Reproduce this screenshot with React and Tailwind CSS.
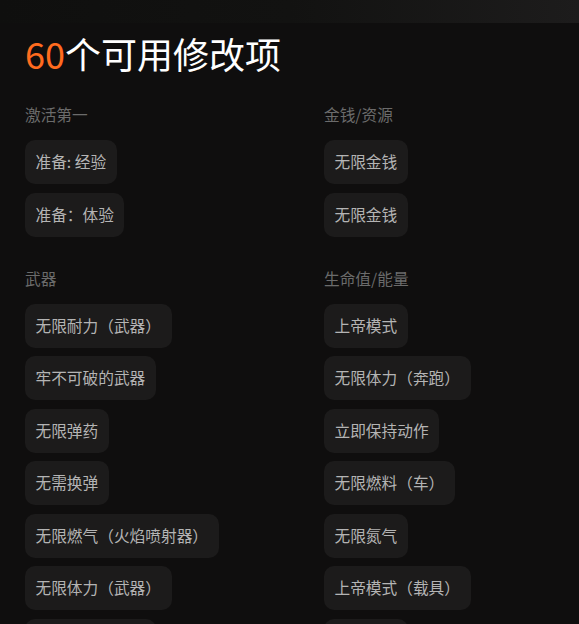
import React from 'react';

const SECTIONS = [
  { title: '激活第一', items: ['准备: 经验', '准备：体验'] },
  { title: '金钱/资源', items: ['无限金钱', '无限金钱'] },
  {
    title: '武器',
    items: ['无限耐力（武器）', '牢不可破的武器', '无限弹药', '无需换弹', '无限燃气（火焰喷射器）', '无限体力（武器）', '无限投掷物数量'],
  },
  {
    title: '生命值/能量',
    items: ['上帝模式', '无限体力（奔跑）', '立即保持动作', '无限燃料（车）', '无限氮气', '上帝模式（载具）', '无限生命'],
  },
];

function Chip({ label }) {
  return (
    <div className="inline-flex items-center h-[44px] px-[10.5px] rounded-[10px] bg-[#1c1b1b] text-[#b4b4b4] text-[15.7px] leading-none whitespace-nowrap">
      {label}
    </div>
  );
}

export default function App() {
  return (
    <div
      className="min-h-screen h-[624px] overflow-hidden bg-[#0f0e0e]"
      style={{ fontFamily: '"Noto Sans CJK SC", "Noto Sans", sans-serif' }}
    >
      {/* blurred banner strip */}
      <div className="h-[23px] bg-gradient-to-r from-[#0f0f0e] via-[#121211] to-[#1d1c1c]" />

      <div className="pl-[25px] pt-[9px]">
        <h1 className="text-[36px] leading-[43px] text-white font-normal">
          <span className="text-[#ff6b1f]">60</span>个可用修改项
        </h1>

        <div className="grid grid-cols-[299px_1fr] gap-y-[30px] mt-[28px]">
          {SECTIONS.map(s => (
            <div key={s.title} className="flex flex-col items-start">
              <span className="text-[15.7px] leading-[24px] text-[#6b6b6b] mb-[13px]">{s.title}</span>
              <div className="flex flex-col items-start gap-[8.5px]">
                {s.items.map((it, i) => (
                  <Chip key={i} label={it} />
                ))}
              </div>
            </div>
          ))}
        </div>
      </div>
    </div>
  );
}
